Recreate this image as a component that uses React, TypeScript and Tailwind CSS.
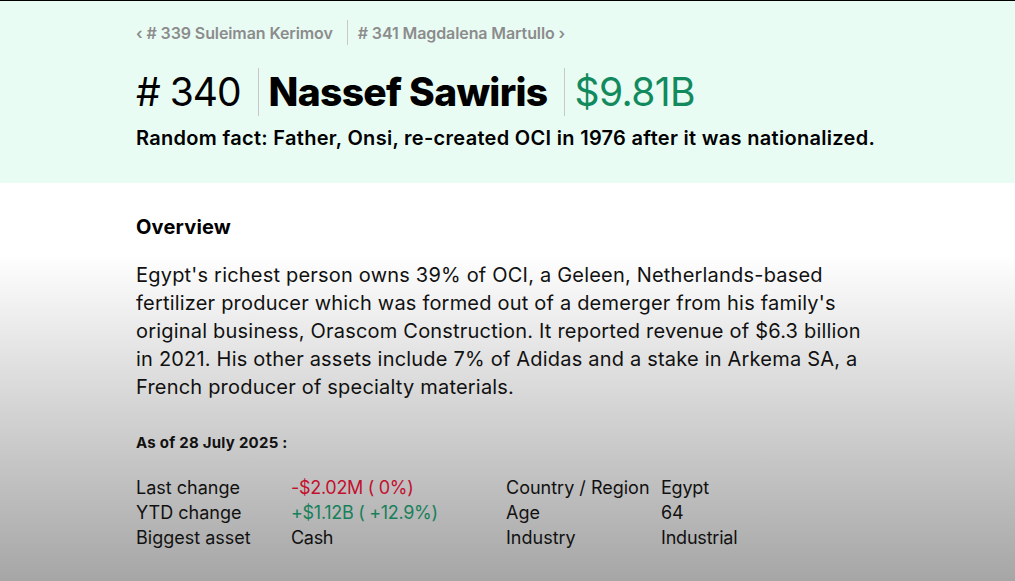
import React from "react";

export default function App() {
  const font = { fontFamily: 'Inter, "Liberation Sans", Arial, sans-serif' };
  return (
    <div className="w-[1015px] h-[581px] overflow-hidden border-t border-black" style={font}>
      <div className="bg-[#e9fcf4] h-[182px] pl-[136px] pt-[19px]">
        <div className="flex items-center text-[16px] font-semibold text-[#8c8c8c] tracking-[-0.1px]">
          <span className="pr-[14px]">‹ # 339 Suleiman Kerimov</span>
          <span className="w-px h-[25px] bg-[#c8c8c8]"></span>
          <span className="pl-[10px]">#&nbsp;341 Magdalena Martullo ›</span>
        </div>
        <div className="flex items-center mt-[23px] h-[48px]">
          <span className="text-[39px] text-black tracking-[-1px] pr-[17px]">#&nbsp;340</span>
          <span className="w-px h-[48px] bg-[#c8c8c8]"></span>
          <span className="text-[39px] font-extrabold text-black tracking-[-0.7px] pl-[10px] pr-[16px]">Nassef Sawiris</span>
          <span className="w-px h-[48px] bg-[#c8c8c8]"></span>
          <span className="text-[39px] text-[#138a5e] tracking-[-0.6px] pl-[10px]">$9.81B</span>
        </div>
        <div className="mt-[7px] text-[20px] font-semibold text-black tracking-[0.3px]">
          Random fact: Father, Onsi, re-created OCI in 1976 after it was nationalized.
        </div>
      </div>
      <div className="h-[398px] bg-gradient-to-b from-white from-[18%] to-[#a6a6a6] pl-[136px] pt-[29px]">
        <div className="text-[20px] font-bold text-black tracking-[0.2px]">Overview</div>
        <p className="mt-[19px] w-[740px] text-[20px] leading-[28px] text-[#111] tracking-[0.2px]">
          Egypt's richest person owns 39% of OCI, a Geleen, Netherlands-based fertilizer producer which was formed out of a demerger from his family's original business, Orascom Construction. It reported revenue of $6.3 billion in 2021. His other assets include 7% of Adidas and a stake in Arkema SA, a French producer of specialty materials.
        </p>
        <div className="mt-[31px] text-[15px] font-bold text-[#111] tracking-[0.25px]">As of 28 July 2025 :</div>
        <div className="mt-[20px] flex text-[18px] leading-[25px] text-[#111] tracking-[0px]">
          <div className="w-[155px] flex flex-col">
            <span>Last change</span>
            <span>YTD change</span>
            <span>Biggest asset</span>
          </div>
          <div className="w-[215px] flex flex-col tracking-[-0.3px]">
            <span className="text-[#c4102f]">-$2.02M ( 0%)</span>
            <span className="text-[#17805a]">+$1.12B ( +12.9%)</span>
            <span>Cash</span>
          </div>
          <div className="w-[155px] flex flex-col">
            <span>Country / Region</span>
            <span>Age</span>
            <span>Industry</span>
          </div>
          <div className="flex flex-col tracking-[-0.2px]">
            <span>Egypt</span>
            <span>64</span>
            <span>Industrial</span>
          </div>
        </div>
      </div>
    </div>
  );
}
